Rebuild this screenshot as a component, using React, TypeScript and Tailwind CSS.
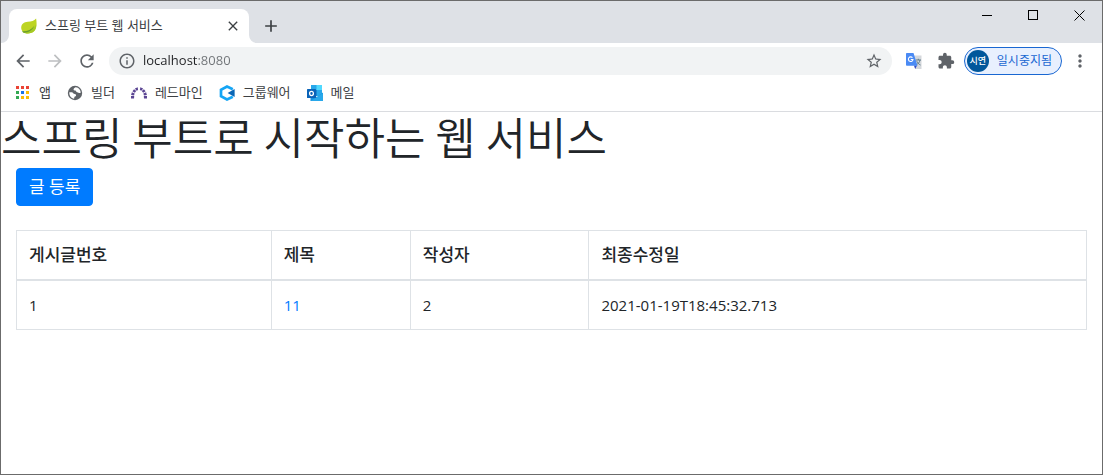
import type { ReactNode } from "react";
import {
  MdAdd,
  MdArrowBack,
  MdArrowForward,
  MdClose,
  MdExtension,
  MdInfoOutline,
  MdMoreVert,
  MdRefresh,
  MdStarBorder,
} from "react-icons/md";

function LeafIcon() {
  return (
    <svg viewBox="0 0 16 16" className="size-4 shrink-0" aria-hidden="true">
      <path d="M15.1.4c.5 3 .9 6.600-.2 10.200-1.300 3.800-5 5.200-9.200 4.800C2.500 15 .2 12.800.2 9.800.2 6 3 4.200 6.800 3.800c3.600-.3 6.300-.8 8.300-3.400z" fill="#bdd423" />
      <path d="M15.200 6.500c0 2-.4 4.400-1.700 6-2 2.600-5 3.200-8.200 2.900-1.300-.1-2.600-.7-3.500-1.500 5.500.2 9.800-1.600 13.400-7.400z" fill="#a4c926" />
      <path d="M1 13.300c5 .4 9-1.300 12.400-5.600-2.400 5.200-6.400 7.200-11.300 6.900z" fill="#6a9f2c" />
    </svg>
  );
}

function AppsIcon() {
  const dots = [
    ["#ea4335", "#ea4335", "#ea4335"],
    ["#34a853", "#1a73e8", "#fbbc05"],
    ["#34a853", "#fbbc05", "#fbbc05"],
  ];
  return (
    <svg viewBox="0 0 16 16" className="size-4" aria-hidden="true">
      {dots.map((row, y) =>
        row.map((fill, x) => (
          <rect key={`${x}-${y}`} x={1 + x * 5} y={1 + y * 5} width="3" height="3" fill={fill} />
        )),
      )}
    </svg>
  );
}

function GlobeIcon() {
  return (
    <svg viewBox="0 0 16 16" className="size-4" aria-hidden="true">
      <circle cx="8" cy="8" r="7.200" fill="#5f6368" />
      <path d="M2.300 7.200h2.400c1.500 0 1.600 1.900 3 1.900 1.200 0 1.500.8 1.300 1.700-.3.900-1.600.6-1.700 1.600l-.2 1.300C4.300 13.400 2.100 10.600 2.300 7.200z" fill="#fff" />
      <path d="M8.800 2.300c-.9.500-2 .8-2.200 1.900-.2 1 .8 1.300 1.700 1.300s.7 1.600 1.900 1.700c1.100.1 1.500 1 2.900.9.5 0 .6-.3.600-.8-.2-2.600-2-4.600-4.900-5z" fill="#fff" />
    </svg>
  );
}

function ArchIcon() {
  return (
    <svg viewBox="0 0 16 16" className="size-4" aria-hidden="true" fill="#5b4593">
      <path d="M0 11h3.200L3 13.500H0z" />
      <path d="M.9 7.300l2.800 1.200-.7 1.900-2.900-.4z" />
      <path d="M3.100 4.200l2.100 1.900-1.300 1.700-2.500-1.500z" />
      <path d="M6.700 2.300l.4 2.600-1.500.8-1.700-2.100z" />
      <path d="M9.300 2.300l-.4 2.600 1.500.8 1.700-2.100z" />
      <path d="M12.900 4.200l-2.100 1.900 1.300 1.700 2.500-1.500z" />
      <path d="M15.100 7.300l-2.800 1.200.7 1.900 2.900-.4z" />
      <path d="M16 11h-3.200l.2 2.500h3z" />
    </svg>
  );
}

function HexagonIcon() {
  return (
    <svg viewBox="0 0 16 16" className="size-4" aria-hidden="true">
      <path d="M13.800 4.200L8 1.500 2 4.700v6.600l6 3.200 5.800-2.700" fill="none" stroke="#14a5f5" strokeWidth="2.700" />
      <path d="M8.600 8L15.600 4v8z" fill="#0b66b5" />
    </svg>
  );
}

function MailIcon() {
  return (
    <svg viewBox="0 0 16 16" className="size-4" aria-hidden="true">
      <rect x="4" y="0" width="11" height="11" fill="#28a8ea" />
      <rect x="9.500" y="0" width="5.500" height="5" fill="#50d9ff" />
      <rect x="4" y="5" width="5.500" height="6" fill="#0364b8" />
      <path d="M3.500 8.500L10 12l6-4.500V16H3.500z" fill="#1490df" />
      <path d="M3.500 16L16 8v8z" fill="#28a8ea" />
      <rect x="0" y="4" width="9" height="9" rx=".6" fill="#0a63b8" />
      <ellipse cx="4.500" cy="8.500" rx="1.900" ry="2.100" fill="none" stroke="#fff" strokeWidth="1.300" />
    </svg>
  );
}

function TranslateIcon() {
  return (
    <svg viewBox="0 0 16 16" className="size-4" aria-hidden="true">
      <path d="M6 2.500h9.500V16H9z" fill="#d5d8dc" />
      <path d="M9.800 7h5.200M12.300 5.800V7M14 7c-.4 2.200-1.900 4-3.800 5M10.800 8.200c.7 1.700 2 3 3.700 3.800" fill="none" stroke="#607d8b" strokeWidth="1" />
      <path d="M8 12.500h3L9.200 16z" fill="#3049c4" />
      <path d="M.8 0h6.700l4 12.800H.8A.8.8 0 0 1 0 12V.8A.8.800 0 0 1 .8 0z" fill="#4a8af4" />
      <path d="M6.500 4.700A2.300 2.300 0 1 0 7 6.500H4.800" fill="none" stroke="#fff" strokeWidth="1.100" />
    </svg>
  );
}

function ToolButton({ label, children }: { label: string; children: ReactNode }) {
  return (
    <button type="button" aria-label={label} className="flex size-7 shrink-0 items-center justify-center rounded-full text-[#5f6368]">
      {children}
    </button>
  );
}

function WindowButton({ label, children }: { label: string; children: ReactNode }) {
  return (
    <button type="button" aria-label={label} className="flex h-7 w-[46px] items-center justify-center">
      <svg viewBox="0 0 11 11" className="size-[11px]" fill="none" stroke="#000" aria-hidden="true">
        {children}
      </svg>
    </button>
  );
}

function TabStrip() {
  return (
    <div className="flex h-[42px] items-end bg-[#dee1e6]">
      <svg viewBox="0 0 8 8" className="size-2 shrink-0" aria-hidden="true">
        <path d="M8 0v8H0a8 8 0 0 0 8-8z" fill="#fff" />
      </svg>
      <div className="flex h-[34px] w-60 items-center rounded-t-lg bg-white pr-2 pl-3">
        <LeafIcon />
        <span className="ml-2 flex-1 truncate text-[13px] text-[#3c4043]">스프링 부트 웹 서비스</span>
        <button type="button" aria-label="탭 닫기" className="text-[#3c4043]">
          <MdClose className="size-4" />
        </button>
      </div>
      <svg viewBox="0 0 8 8" className="size-2 shrink-0" aria-hidden="true">
        <path d="M0 0v8h8a8 8 0 0 1-8-8z" fill="#fff" />
      </svg>
      <button type="button" aria-label="새 탭" className="flex h-[34px] w-7 items-center justify-center text-[#3c4043]">
        <MdAdd className="size-5" />
      </button>
      <div className="ml-auto flex self-start">
        <WindowButton label="최소화">
          <path d="M0 5.500h10" />
        </WindowButton>
        <WindowButton label="최대화">
          <rect x=".5" y=".5" width="9" height="9" />
        </WindowButton>
        <WindowButton label="닫기">
          <path d="M.5.5l10 10M10.500.5l-10 10" />
        </WindowButton>
      </div>
    </div>
  );
}

function Toolbar() {
  return (
    <div className="flex h-9 items-center gap-1 px-2">
      <ToolButton label="뒤로">
        <MdArrowBack className="size-5" />
      </ToolButton>
      <ToolButton label="앞으로">
        <MdArrowForward className="size-5 text-[#bdbfc1]" />
      </ToolButton>
      <ToolButton label="새로고침">
        <MdRefresh className="size-5" />
      </ToolButton>
      <div className="mx-1 flex h-7 min-w-0 flex-1 items-center rounded-full bg-[#f1f3f4] px-[9px] text-[#5f6368]">
        <MdInfoOutline className="size-[18px] shrink-0" />
        <input
          type="text"
          aria-label="주소창"
          defaultValue="localhost:8080"
          className="ml-[7px] min-w-0 flex-1 bg-[linear-gradient(to_right,#202124_55px,#6f7377_55px)] bg-clip-text text-[13px] text-transparent outline-none"
        />
        <button type="button" aria-label="북마크에 추가" className="shrink-0">
          <MdStarBorder className="size-[18px]" />
        </button>
      </div>
      <ToolButton label="번역">
        <TranslateIcon />
      </ToolButton>
      <ToolButton label="확장 프로그램">
        <MdExtension className="size-[18px]" />
      </ToolButton>
      <button type="button" className="flex h-7 shrink-0 items-center gap-2 rounded-full border border-[#1967d2] bg-[#e8f0fe] pr-[9px] pl-0.5 text-xs text-[#1967d2]">
        <span className="flex size-[22px] items-center justify-center rounded-full bg-[#01579b] text-[9px] font-medium text-white">
          시연
        </span>
        일시중지됨
      </button>
      <ToolButton label="메뉴">
        <MdMoreVert className="size-5" />
      </ToolButton>
    </div>
  );
}

const bookmarks = [
  { label: "앱", icon: <AppsIcon /> },
  { label: "빌더", icon: <GlobeIcon /> },
  { label: "레드마인", icon: <ArchIcon /> },
  { label: "그룹웨어", icon: <HexagonIcon /> },
  { label: "메일", icon: <MailIcon /> },
];

function BookmarksBar() {
  return (
    <nav aria-label="북마크" className="flex h-[33px] items-center gap-4 border-b border-[#dadce0] px-3.5 pb-1">
      {bookmarks.map(({ label, icon }) => (
        <a key={label} href="#" className="flex items-center gap-2 text-[13px] text-[#3c4043]">
          {icon}
          {label}
        </a>
      ))}
    </nav>
  );
}

const posts = [{ id: 1, title: "11", author: "2", modified: "2021-01-19T18:45:32.713" }];

const cell = "border border-[#dee2e6] p-3 text-left";

function PostPage() {
  return (
    <main className="text-[#212529]">
      <h1 className="mb-2 font-['Noto_Sans_CJK_KR',sans-serif] text-[44px] leading-[48px] font-[350]">
        스프링 부트로 시작하는 웹 서비스
      </h1>
      <div className="px-[15px]">
        <a
          href="#"
          className="inline-block rounded border border-[#007bff] bg-[#007bff] px-3 py-1.5 align-top text-[17px] leading-6 text-white"
        >
          글 등록
        </a>
        <table className="mt-6 w-full table-fixed border-collapse border border-[#dee2e6]">
          <colgroup>
            <col className="w-[23.8%]" />
            <col className="w-[13%]" />
            <col className="w-[16.7%]" />
            <col />
          </colgroup>
          <thead>
            <tr className="text-[17px] leading-6">
              {["게시글번호", "제목", "작성자", "최종수정일"].map((name) => (
                <th key={name} scope="col" className={`${cell} border-b-2 font-medium`}>
                  {name}
                </th>
              ))}
            </tr>
          </thead>
          <tbody>
            {posts.map((post) => (
              <tr key={post.id} className="text-[15px] leading-6">
                <td className={cell}>{post.id}</td>
                <td className={cell}>
                  <a href="#" className="text-[#007bff]">
                    {post.title}
                  </a>
                </td>
                <td className={cell}>{post.author}</td>
                <td className={cell}>{post.modified}</td>
              </tr>
            ))}
          </tbody>
        </table>
      </div>
    </main>
  );
}

export default function App() {
  return (
    <div className="min-h-screen border border-[#6b6b6b] bg-white font-['Open_Sans','Noto_Sans_CJK_KR',sans-serif]">
      <header>
        <TabStrip />
        <Toolbar />
        <BookmarksBar />
      </header>
      <PostPage />
    </div>
  );
}
